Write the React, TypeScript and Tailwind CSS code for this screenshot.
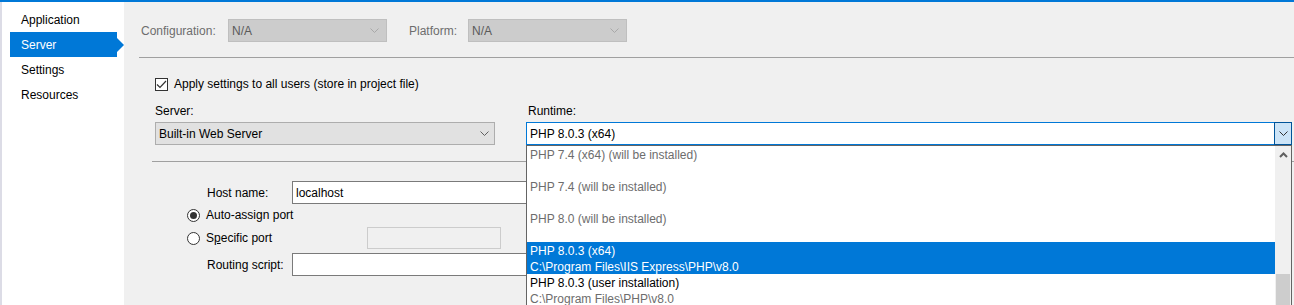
import React from 'react';

const font = { fontFamily: '"Liberation Sans", Arial, sans-serif' };

function Chevron({ color = '#606060' }: { color?: string }) {
  return (
    <svg width="9" height="6" viewBox="0 0 9 6" fill="none">
      <path d="M0.5 0.5 L4.5 4.5 L8.5 0.5" stroke={color} strokeWidth="1" />
    </svg>
  );
}

function Radio({ checked }: { checked?: boolean }) {
  return (
    <span className="relative flex h-[13px] w-[13px] items-center justify-center rounded-full border border-[#333333] bg-white">
      {checked && <span className="h-[7px] w-[7px] rounded-full bg-[#333333]" />}
    </span>
  );
}

function DropItem({
  lines,
  selected,
  muted,
}: {
  lines: [string, string?];
  selected?: boolean;
  muted?: boolean;
}) {
  return (
    <div
      className={`h-[32px] pl-[3px] pt-[1px] leading-[16px] ${
        selected ? 'bg-[#0078d7] text-white' : muted ? 'text-[#6d6d6d]' : 'text-black'
      }`}
    >
      <div>{lines[0]}</div>
      {lines[1] && <div className={selected ? 'text-white' : 'text-[#6d6d6d]'}>{lines[1]}</div>}
    </div>
  );
}

export default function App() {
  const nav = ['Application', 'Server', 'Settings', 'Resources'];

  return (
    <div
      className="relative flex h-[305px] w-[1294px] overflow-hidden border-t-2 border-[#0078d7] bg-[#f0f0f0] text-[12px] text-black"
      style={font}
    >
      {/* Sidebar */}
      <div className="w-[124px] shrink-0 border-l-2 border-[#dcdce6] bg-white pt-[5px]">
        {nav.map((item) => (
          <div
            key={item}
            className={`relative ml-[8px] flex h-[25px] w-[107px] items-center pl-[11px] ${
              item === 'Server' ? 'bg-[#0078d7] text-white' : ''
            }`}
          >
            {item}
            {item === 'Server' && (
              <span className="absolute left-[107px] top-[6px] h-0 w-0 border-y-[7px] border-l-[7px] border-y-transparent border-l-[#0078d7]" />
            )}
          </div>
        ))}
      </div>

      {/* Content */}
      <div className="flex-1 pl-[15px]">
        <div className="mt-[17px] flex items-center pl-[2px]">
          <span className="w-[87px] text-[#6d6d6d]">Configuration:</span>
          <div className="flex h-[23px] w-[159px] items-center justify-between border border-[#bfbfbf] bg-[#cccccc] pl-[3px] pr-[7px] text-[#5a5a5a]">
            N/A
            <Chevron color="#a8a8a8" />
          </div>
          <span className="ml-[22px] w-[59px] text-[#6d6d6d]">Platform:</span>
          <div className="flex h-[23px] w-[159px] items-center justify-between border border-[#bfbfbf] bg-[#cccccc] pl-[3px] pr-[7px] text-[#5a5a5a]">
            N/A
            <Chevron color="#a8a8a8" />
          </div>
        </div>

        <div className="mt-[15px] h-px bg-[#a0a0a0]" />

        <div className="pl-[16px]">
          <div className="mt-[17px] flex items-center gap-[6px]">
            <span className="flex h-[13px] w-[13px] items-center justify-center border border-[#333333] bg-white">
              <svg width="11" height="9" viewBox="0 0 11 9" fill="none">
                <path d="M1 4.5 L4 7.5 L10 1" stroke="#333333" strokeWidth="1.2" />
              </svg>
            </span>
            <span>Apply settings to all users (store in project file)</span>
          </div>

          <div className="mt-[10px] flex">
            <div className="w-[371px]">
              <div className="h-[16px] leading-[16px]">Server:</div>
              <div className="mt-[3px] flex h-[23px] w-[340px] items-center justify-between border border-[#adadad] bg-[#e1e1e1] pl-[3px] pr-[5px]">
                Built-in Web Server
                <Chevron />
              </div>
            </div>
            <div className="flex-1">
              <div className="h-[16px] pl-[2px] leading-[16px]">Runtime:</div>
              <div className="mt-[3px] flex h-[23px] w-[766px] border border-[#0078d7] bg-white">
                <span className="flex flex-1 items-center pl-[3px]">PHP 8.0.3 (x64)</span>
                <span className="-my-px -mr-px flex w-[18px] items-center justify-center border border-[#005499] bg-[#cce4f7]">
                  <Chevron color="#333333" />
                </span>
              </div>
            </div>
          </div>
        </div>

        <div className="ml-[13px] mt-[16px] h-px bg-[#a0a0a0]" />

        <div className="pl-[48px]">
          <div className="mt-[19px] flex items-center">
            <span className="w-[105px] pl-[20px]">Host name:</span>
            <div className="flex h-[23px] w-[300px] items-center border border-[#7a7a7a] bg-white pl-[3px]">localhost</div>
          </div>
          <div className="mt-[2px] flex h-[18px] items-center gap-[6px]">
            <Radio checked />
            <span>Auto-assign port</span>
          </div>
          <div className="mt-[3px] flex h-[22px] items-center">
            <Radio />
            <span className="ml-[6px] w-[161px]">
              S<span className="underline">p</span>ecific port
            </span>
            <div className="h-[22px] w-[134px] border border-[#cccccc] bg-[#f0f0f0]" />
          </div>
          <div className="mt-[4px] flex items-center">
            <span className="w-[105px] pl-[20px]">Routing script:</span>
            <div className="h-[23px] w-[300px] border border-[#7a7a7a] bg-white" />
          </div>
        </div>
      </div>

      {/* Open dropdown list */}
      <div className="absolute left-[526px] top-[143px] flex h-[170px] w-[766px] border border-[#646464] bg-white">
        <div className="flex-1">
          <DropItem lines={['PHP 7.4 (x64) (will be installed)']} muted />
          <DropItem lines={['PHP 7.4 (will be installed)']} muted />
          <DropItem lines={['PHP 8.0 (will be installed)']} muted />
          <DropItem lines={['PHP 8.0.3 (x64)', 'C:\\Program Files\\IIS Express\\PHP\\v8.0']} selected />
          <DropItem lines={['PHP 8.0.3 (user installation)', 'C:\\Program Files\\PHP\\v8.0']} />
        </div>
        <div className="flex w-[16px] flex-col bg-[#f0f0f0]">
          <div className="flex h-[17px] items-center justify-center">
            <svg width="9" height="6" viewBox="0 0 9 6" fill="none">
              <path d="M1 5 L4.5 1.5 L8 5" stroke="#606060" strokeWidth="2" />
            </svg>
          </div>
          <div className="flex-1" />
          <div className="mx-px mt-[100px] h-[40px] bg-[#cdcdcd]" />
        </div>
      </div>
    </div>
  );
}
